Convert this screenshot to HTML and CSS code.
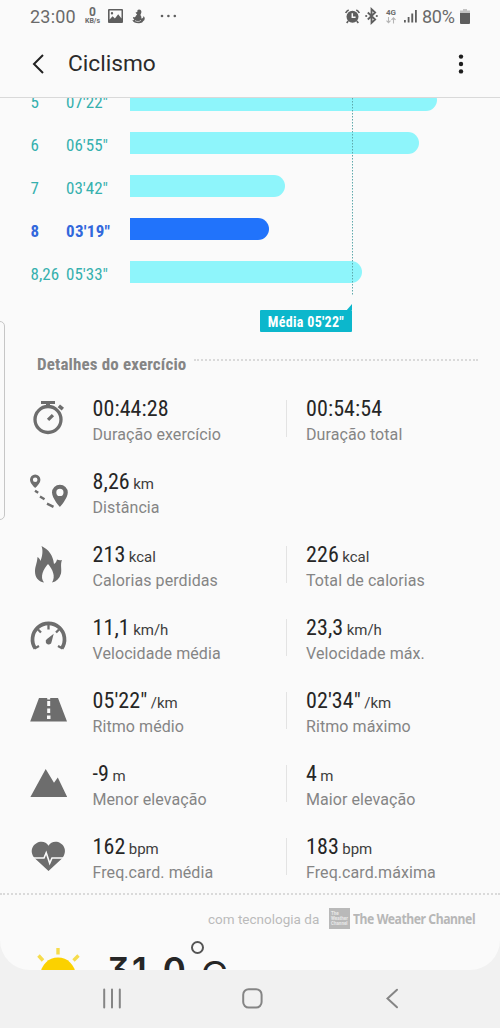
FILE: index.html
```html
<!DOCTYPE html>
<html lang="pt-BR">
<head>
<meta charset="utf-8">
<title>Ciclismo</title>
<link rel="stylesheet" href="styles.css">
</head>
<body>
<div class="phone">
  <div class="screen">
    <div class="status">
      <span class="clock">23:00</span>
      <span class="speed"><b>0</b><small>KB/s</small></span>
      <svg class="pic" width="15" height="14" viewBox="0 0 15 14"><path fill-rule="evenodd" d="M1 0h13a1 1 0 0 1 1 1v12a1 1 0 0 1-1 1H1a1 1 0 0 1-1-1V1a1 1 0 0 1 1-1zM1.6 1.6v9l3-3.4 2.3 2.2 3.3-4.2 3.3 4.2V1.6zM4 3a1.2 1.2 0 1 1 0 2.4A1.2 1.2 0 0 1 4 3z"/></svg>
      <svg class="duck" width="13" height="15" viewBox="0 0 13 15"><path d="M7 .5C9 .5 9.700 2 9.300 3.800L8.400 6c1 1.300 1.200 2.200.9 3.500 1.500.1 2.200-.8 2.200-2.500 1.800 1.500 1.700 4.300-.4 5.300-.7 1.500-2.500 2-4.500 1.900C3.500 14.200 1 13.300.4 11c1 .3 1.600.1 1.900-.4C1.300 9.900.8 8.900 1 8c1 .5 1.800.3 2.500-.3C3.700 6.600 4.500 6 5.200 5.700L3.500 3.500l1.800-.6C5.200 1.300 5.900.5 7 .5z"/><path d="M3 11.500c2 1.500 4.500 1.300 6-.3" fill="none" stroke="#fafafa" stroke-width=".6"/></svg>
      <svg class="more" width="17" height="4" viewBox="0 0 17 4"><circle cx="2" cy="2" r="1.300"/><circle cx="8.400" cy="2" r="1.300"/><circle cx="14.800" cy="2" r="1.300"/></svg>
      <span class="grow"></span>
      <svg class="alarm" width="15" height="15" viewBox="0 0 15 15"><circle cx="7.500" cy="7.800" r="6"/><path d="M.7 4Q1.500 1.800 3.700.9M14.300 4Q13.500 1.800 11.300.9M3.200 12 1.700 14M11.800 12l1.500 2" fill="none" stroke="#5e5e5e" stroke-width="1.600"/><path d="M7.300 4.300v4h3.300" fill="none" stroke="#fafafa" stroke-width="1.500"/></svg>
      <svg class="bt" width="13" height="16" viewBox="0 0 13 16"><path d="M2.800 4.500l7.400 7L6.500 15V1l3.700 3.500-7.400 7" fill="none" stroke="#5e5e5e" stroke-width="1.800"/><circle cx="1.200" cy="8" r="1.100"/><circle cx="11.800" cy="8" r="1.100"/></svg>
      <span class="net"><b>4G</b><svg width="10" height="7" viewBox="0 0 10 7"><path d="M2.500 0v5.500M.5 3.700l2 2 2-2M7.500 6.500V1M5.500 2.800l2-2 2 2" fill="none" stroke="#b5b5b5" stroke-width="1.100"/></svg></span>
      <svg class="signal" width="13" height="14" viewBox="0 0 13 14"><path d="M0 11h1.800v2.500H0zM3.700 8h1.800v5.500H3.700zM7.300 4.500h1.900v9H7.300zM11 1h1.800v12.500H11z"/></svg>
      <span class="pct">80%</span>
      <svg class="batt" width="10" height="15" viewBox="0 0 10 15"><path d="M3 0h4v1.500h3V5H0V1.500h3z" fill="#c4c4c4"/><path d="M0 4h10v10a1 1 0 0 1-1 1H1a1 1 0 0 1-1-1z"/></svg>
    </div>

    <header class="bar-top">
      <svg class="back" width="12" height="20" viewBox="0 0 12 20"><path d="M11 1 2 10l9 9" fill="none" stroke="#222" stroke-width="2"/></svg>
      <h1>Ciclismo</h1>
      <svg class="menu" width="6" height="20" viewBox="0 0 6 20"><circle cx="3" cy="2.600" r="2.200"/><circle cx="3" cy="10" r="2.200"/><circle cx="3" cy="17.400" r="2.200"/></svg>
    </header>

    <section class="chart">
      <div class="split"><span class="km">5</span><span class="time">07'22"</span><i class="bar" style="width:307px"></i></div>
      <div class="split"><span class="km">6</span><span class="time">06'55"</span><i class="bar" style="width:289px"></i></div>
      <div class="split"><span class="km">7</span><span class="time">03'42"</span><i class="bar" style="width:155px"></i></div>
      <div class="split best"><span class="km">8</span><span class="time">03'19"</span><i class="bar" style="width:139px"></i></div>
      <div class="split"><span class="km">8,26</span><span class="time">05'33"</span><i class="bar" style="width:232px"></i></div>
      <svg class="avg-line" width="1" height="197" viewBox="0 0 1 197"><path d="M.5 0v197" stroke="#5fa9ac" stroke-width="1" stroke-dasharray="1.500 1.500"/></svg>
      <svg class="tip" width="6" height="7" viewBox="0 0 6 7"><path d="M6 0v7H0z"/></svg>
    </section>
    <div class="avg"><span>Média 05'22"</span></div>

    <div class="heading"><h2>Detalhes do exercício</h2><i class="dots"></i></div>

    <section class="metrics">
      <div class="metric">
        <svg class="ico" width="40" height="40" viewBox="0 0 40 40"><circle cx="20" cy="23.500" r="13" fill="none" stroke="#6d6d6d" stroke-width="3.300"/><path d="M13 5h14v3h-5v3h-4V8h-5zM32 8.500l4 3.300-2.300 2.700-4-3.300zM18.900 22.700l4.900-4.800 2.300 2.300-4.900 4.800z"/></svg>
        <div class="cell"><p class="value">00:44:28</p><p class="label">Duração exercício</p></div>
        <div class="cell second"><p class="value">00:54:54</p><p class="label">Duração total</p></div>
      </div>
      <div class="metric">
        <svg class="ico" width="40" height="40" viewBox="0 -1 40 40"><path fill-rule="evenodd" d="M7.200 4.500a5.200 5.200 0 0 1 5.200 5.200c0 3.800-5.200 8.300-5.200 8.300S2 13.500 2 9.700a5.200 5.200 0 0 1 5.200-5.200zm0 3a2.300 2.300 0 1 0 0 4.600 2.300 2.300 0 0 0 0-4.600zM31.900 14.700a7.900 7.900 0 0 1 7.900 7.900c0 5.700-7.900 14.500-7.900 14.500S24 28.300 24 22.600a7.900 7.900 0 0 1 7.900-7.900zm0 4.100a3.600 3.600 0 1 0 0 7.200 3.600 3.600 0 0 0 0-7.200z"/><path d="M7 20.700l3.200 2M12 26.500l4.500 2.800M19 33.700l6.500 3.200" fill="none" stroke="#6d6d6d" stroke-width="2.400"/></svg>
        <div class="cell"><p class="value">8,26 <small>km</small></p><p class="label">Distância</p></div>
      </div>
      <div class="metric">
        <svg class="ico" width="40" height="40" viewBox="0 -2 40 40"><path d="M13.500 2c7 3.500 11.500 9 12.500 18 1.500-1 2.500-2.500 3-4.500 1.500.8 3 1 5 .5-2 5 0 9-1 13.500-1.500 5-4.500 8-9 9 4-6 .5-13.500-4-18.500-4.500 5-8.500 13-4 18.500C10 37.500 7 33 7 27.500c0-5 2-7.500 2.500-14.500 1.500 1 2.500 2 3 4C14 13 15.500 7.500 13.500 2z"/></svg>
        <div class="cell"><p class="value">213 <small>kcal</small></p><p class="label">Calorias perdidas</p></div>
        <div class="cell second"><p class="value">226 <small>kcal</small></p><p class="label">Total de calorias</p></div>
      </div>
      <div class="metric">
        <svg class="ico" width="40" height="40" viewBox="0 -3 40 40"><path d="M7.300 30.500a16 16 0 1 1 26.400 0" fill="none" stroke="#6d6d6d" stroke-width="3.700"/><path d="M20.500 6v5.500M10 11.500l3 3M31 11.500l-3 3M6.500 30.500l4.500-2.500M34.500 30.500 30 28" fill="none" stroke="#6d6d6d" stroke-width="2.300"/><path d="M25.700 15.700 23.700 23.500a3 3 0 1 1-4.400-2.700z"/></svg>
        <div class="cell"><p class="value">11,1 <small>km/h</small></p><p class="label">Velocidade média</p></div>
        <div class="cell second"><p class="value">23,3 <small>km/h</small></p><p class="label">Velocidade máx.</p></div>
      </div>
      <div class="metric">
        <svg class="ico" width="40" height="40" viewBox="0 -1.500 40 40"><path fill-rule="evenodd" d="M11 8.500h19l9 23.500H2.200zM19.200 11.500v5h3v-5zM19.200 19v4.500h3V19zM19 26v3.500h3.500V26z"/><path d="M19.200 8h3v2h-3z" fill="#fafafa"/></svg>
        <div class="cell"><p class="value">05'22" <small>/km</small></p><p class="label">Ritmo médio</p></div>
        <div class="cell second"><p class="value">02'34" <small>/km</small></p><p class="label">Ritmo máximo</p></div>
      </div>
      <div class="metric">
        <svg class="ico" width="40" height="40" viewBox="0 -2 40 40"><path d="M17.700 6 26 19.800l3.800-5.300L39.200 34H2.400z"/></svg>
        <div class="cell"><p class="value">-9 <small>m</small></p><p class="label">Menor elevação</p></div>
        <div class="cell second"><p class="value">4 <small>m</small></p><p class="label">Maior elevação</p></div>
      </div>
      <div class="metric">
        <svg class="ico" width="40" height="40" viewBox="0 -2.500 40 40"><path d="M20.500 34.500 7 22C-.5 13.500 6.500 5.200 13.500 5.200c3 0 5.500 1.500 7 4 1.500-2.500 4-4 7-4C34.500 5.200 41 13.500 34 22z"/><path d="M3 21.500h13l2.200-5.200 3.500 10.500 2.300-5.300h14" fill="none" stroke="#fafafa" stroke-width="1.600"/></svg>
        <div class="cell"><p class="value">162 <small>bpm</small></p><p class="label">Freq.card. média</p></div>
        <div class="cell second"><p class="value">183 <small>bpm</small></p><p class="label">Freq.card.máxima</p></div>
      </div>
    </section>

    <i class="dots wide"></i>
    <div class="credit">
      <span class="powered">com tecnologia da</span>
      <span class="logo">The<br>Weather<br>Channel</span>
      <b>The Weather Channel</b>
    </div>
    <div class="weather">
      <svg class="sun" width="44" height="24" viewBox="0 0 44 24"><circle cx="21" cy="27" r="17.500" fill="#fbd100"/><path d="M21 0v6.500M1.500 7.500 6 12.500M41.500 7.500 36.500 12.500" stroke="#f6dc4c" stroke-width="3.400"/></svg>
      <span class="temp">31.0</span><span class="deg"></span><span class="unit">C</span>
    </div>
    <div class="edge"></div>
  </div>

  <nav class="nav">
    <svg width="18" height="19" viewBox="0 0 18 19"><path d="M1.200.5v18M9 .5v18M16.800.5v18"/></svg>
    <svg width="21" height="21" viewBox="0 0 21 21"><rect x="1.200" y="1.200" width="18.400" height="18.400" rx="5.500"/></svg>
    <svg width="12" height="19" viewBox="0 0 12 19"><path d="M11 .8 1.500 9.500l9.500 8.700"/></svg>
  </nav>
</div>
</body>
</html>
```
FILE: styles.css
```css
* { box-sizing: border-box; }
body { margin: 0; background: #f1f1f1; font-family: Roboto, "Liberation Sans", sans-serif; }
h1, h2, p { margin: 0; font-weight: 400; }
svg { display: block; flex: none; overflow: visible; }
i { display: block; }

.phone { width: 500px; height: 1028px; display: flex; flex-direction: column; }
.screen {
  position: relative; height: 970px; overflow: hidden; background: #fafafa;
  border-radius: 0 0 30px 30px; display: flex; flex-direction: column;
}
.screen > * { flex: none; }

.status { height: 32px; display: flex; align-items: center; padding: 0 30px 0 30px; color: #6a6a6a; fill: #5e5e5e; }
.clock { width: 54px; font-size: 18px; letter-spacing: .2px; }
.speed { width: 17px; display: flex; flex-direction: column; align-items: center; margin-right: 7px; }
.speed b { font-size: 12px; line-height: 10px; font-weight: 700; }
.speed small { font-size: 7px; line-height: 8px; font-weight: 700; }
.duck { margin-left: 9px; }
.more { margin-left: 15px; }
.grow { flex: 1; }
.bt { margin-left: 5px; }
.net { margin-left: 7px; width: 12px; display: flex; flex-direction: column; align-items: center; }
.net b { font-size: 8px; line-height: 8px; }
.signal { margin-left: 7px; }
.pct { margin-left: 5px; width: 38px; font-size: 18px; letter-spacing: -.3px; }

.bar-top { height: 66px; display: flex; align-items: center; padding: 0 36px 2px 32px; border-bottom: 1px solid #d9d9d9; }
.bar-top h1 { flex: 1; margin-left: 24px; font-size: 22.700px; color: #2b2b2b; }
.menu { fill: #1d1d1d; }

.chart { position: relative; height: 212px; padding-left: 30.500px; overflow: hidden; }
.split { display: flex; height: 43px; color: #35b0ae; font: 17px/26px "Roboto Condensed", Roboto, sans-serif; font-stretch: 75%; }
.split:first-child { margin-top: -9px; }
.km { width: 35.500px; }
.time { width: 64.300px; }
.bar { height: 22px; background: #8ef5fb; border-radius: 0 11px 11px 0; }
.best { color: #3268dc; font-weight: 700; letter-spacing: .3px; }
.best .bar { background: #2173fb; }
.avg-line { position: absolute; left: 352px; top: 0; }
.tip { position: absolute; left: 346px; top: 206px; fill: #0cb7cc; }
.avg {
  width: 92px; height: 22px; margin-left: 260px; background: #0cb7cc; border-radius: 1px; color: #fff;
  font: 700 14px/24px "Roboto Condensed", Roboto, sans-serif; font-stretch: 75%; letter-spacing: .3px; text-align: center; white-space: nowrap;
}

.heading { height: 64px; display: flex; align-items: flex-start; padding: 22px 22px 0 37px; }
.heading h2 { width: 157px; font: 700 17px/20px "Roboto Condensed", Roboto, sans-serif; font-stretch: 75%; letter-spacing: .15px; color: #858585; white-space: nowrap; }
.dots { flex: 1; margin-top: 5px; height: 2px; border-top: 2px dotted #dadada; }

.metrics { display: flex; flex-direction: column; }
.metric { height: 73px; display: flex; padding-left: 28px; fill: #6d6d6d; }
.cell { width: 193.500px; margin-left: 24.500px; white-space: nowrap; }
.second { width: 170px; margin-left: 0; padding-left: 20px; position: relative; }
.second::before { content: ""; position: absolute; left: 0; top: 4px; width: 1px; height: 37px; background: #e3e3e3; }
.value { font: 22px/26px "Roboto Condensed", Roboto, sans-serif; font-stretch: 75%; letter-spacing: .1px; color: #262626; }
.value small { margin-left: -1.800px; font: 15px Roboto, sans-serif; letter-spacing: 0; color: #3d3d3d; }
.label { font-size: 16px; line-height: 25px; letter-spacing: .08px; color: #858585; }

.wide { flex: none; margin: -14px 0 0; height: 2px; }
.credit { display: flex; align-items: center; height: 21px; margin-top: 13px; padding-left: 208px; color: #bababa; font-size: 13.500px; white-space: nowrap; }
.powered { width: 121px; }
.logo { width: 21px; height: 21px; padding: 3px 2px; background: #b9b9b9; color: #e9e9e9; font-size: 4.500px; line-height: 5px; font-weight: 700; }
.credit b { margin-left: 3px; font: 700 14px/21px "Noto Sans", sans-serif; letter-spacing: -.5px; color: #b7b7b7; transform: scaleX(.87); transform-origin: left; }
.weather { display: flex; align-items: flex-start; height: 41px; padding-left: 37px; margin-top: 19px; color: #262626; }
.temp { width: 82px; margin: 0 0 0 26px; font: 600 35px/44px Inter, sans-serif; font-feature-settings: "cv09"; letter-spacing: 2.800px; white-space: nowrap; }
.deg { width: 13px; height: 13px; margin: -7px 0 0 2px; border: 2.800px solid #555; border-radius: 50%; }
.unit { margin: 6px 0 0 -3px; font: 34px/40px Inter, sans-serif; transform: scaleX(1.08); transform-origin: left; }

.edge { position: absolute; left: -5px; top: 321px; width: 10px; height: 199px; border: 1px solid #c6c6c6; border-radius: 6px; }
.nav { height: 58px; display: flex; justify-content: space-between; align-items: center; padding: 0 102px 2px 103px; }
.nav svg { fill: none; stroke: #858585; stroke-width: 2; stroke-linecap: round; }
.nav svg:nth-child(2) { margin-left: -3px; }
```
